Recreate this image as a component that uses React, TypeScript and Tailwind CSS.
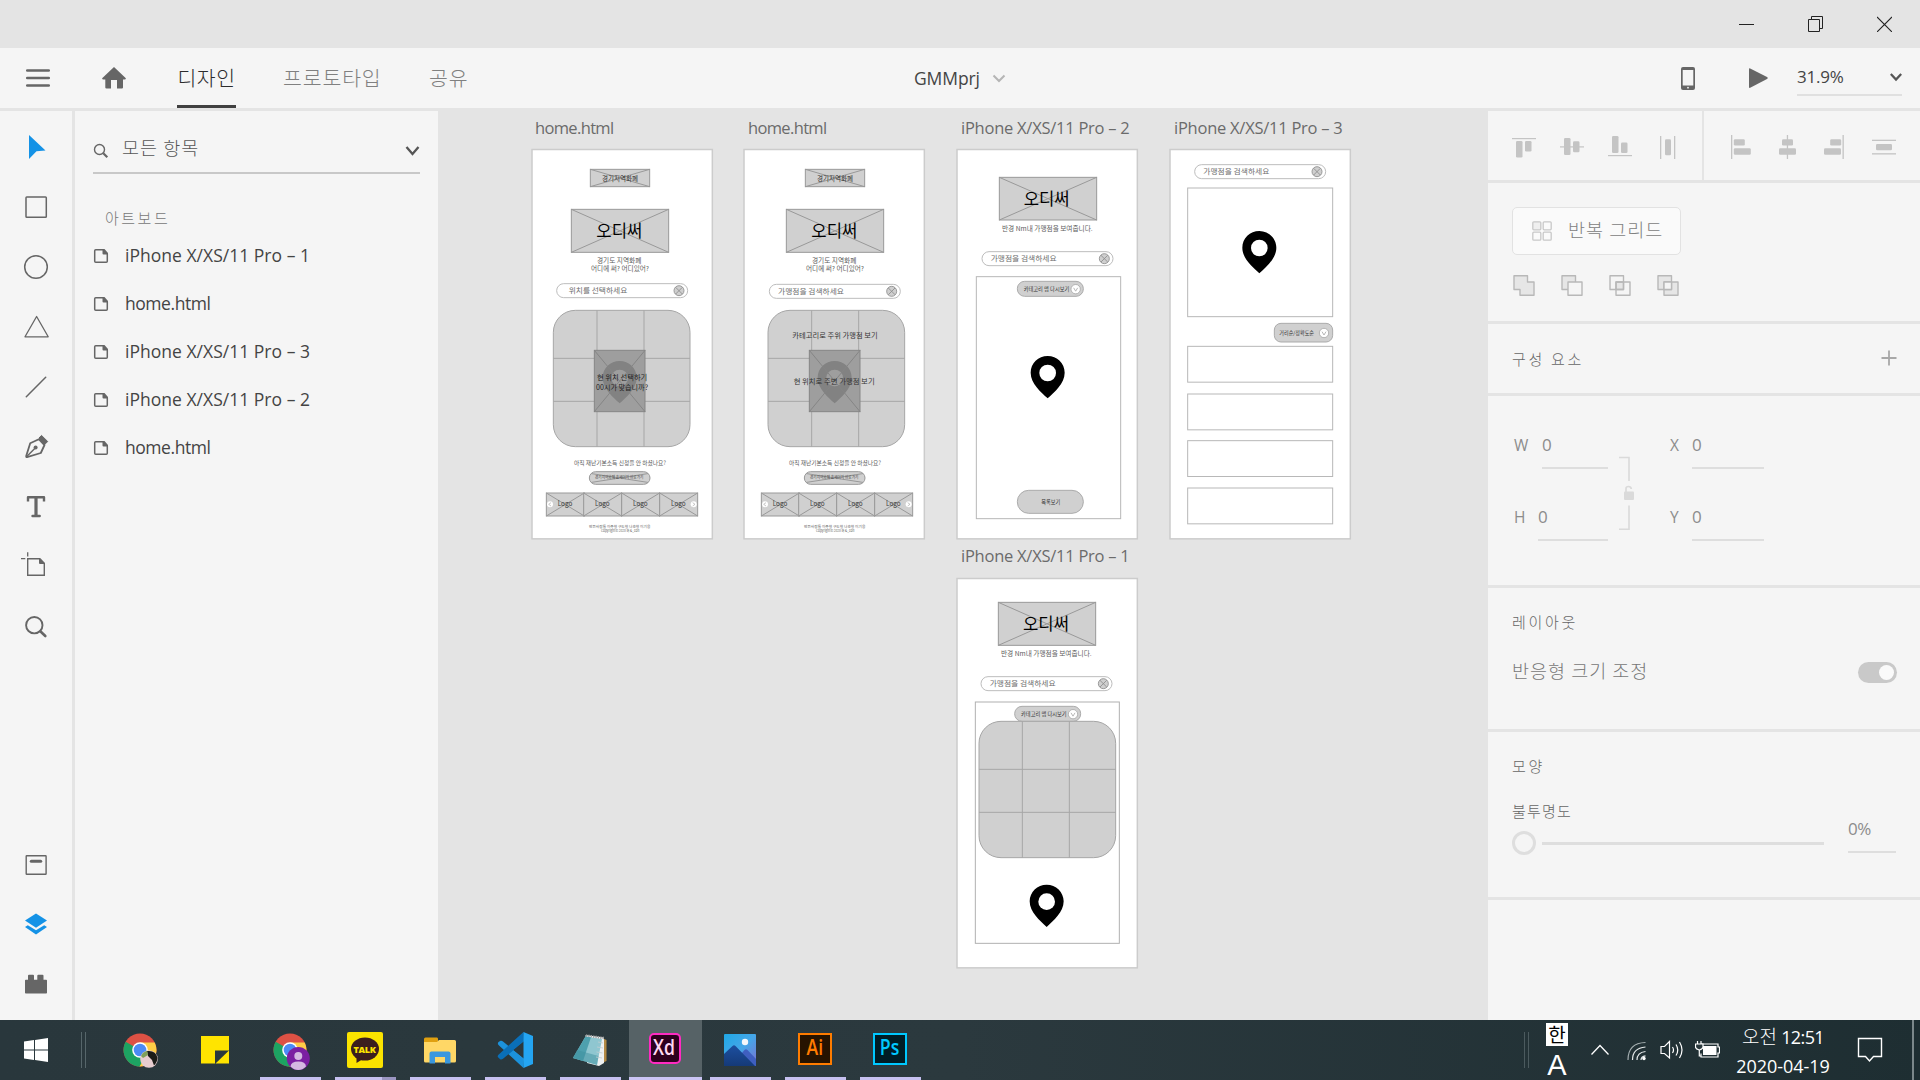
import React from "react";

const UI = "font-['Open_Sans','Noto_Sans_CJK_KR',sans-serif]";
const KR = "font-['Noto_Sans_CJK_KR','Open_Sans',sans-serif]";

/* ---------- wireframe primitives (drawn at three units per pixel) ---------- */

type TProps = {
  x: number;
  y: number;
  w: number;
  size: number;
  fill?: string;
  weight?: number;
  children: string;
};
function Label({ x, y, w, size, fill = "#5c5c5c", weight = 400, children }: TProps) {
  return (
    <text
      x={x}
      y={y}
      textLength={w}
      lengthAdjust="spacingAndGlyphs"
      fontSize={size}
      fontWeight={weight}
      fill={fill}
      className={KR}
    >
      {children}
    </text>
  );
}

function CrossBox({ x, y, w, h, r = 0, fill = "#d0d0d0", stroke = "#999" }: { x: number; y: number; w: number; h: number; r?: number; fill?: string; stroke?: string }) {
  const i = r * 0.3;
  return (
    <g stroke={stroke} strokeWidth={3}>
      <rect x={x} y={y} width={w} height={h} rx={r} fill={fill} />
      <path fill="none" d={`M${x + i} ${y + i}L${x + w - i} ${y + h - i}M${x + w - i} ${y + i}L${x + i} ${y + h - i}`} />
    </g>
  );
}

function Pin({ x, y, fill = "#000", hole = "#fff" }: { x: number; y: number; fill?: string; hole?: string }) {
  return (
    <g transform={`translate(${x} ${y + 1})`}>
      <path fill={fill} d="M0-51C28-51 51-29 51-1C51 32 20 57 0 76C-20 57-51 32-51-1C-51-29-28-51 0-51Z" />
      <circle r={25} fill={hole} />
    </g>
  );
}

function SearchPill({ x, y, text, tx, tw }: { x: number; y: number; text: string; tx: number; tw: number }) {
  return (
    <g>
      <rect x={x} y={y} width={393} height={42} rx={21} fill="#fff" stroke="#bdbdbd" strokeWidth={3} />
      <Label x={tx} y={y + 28} w={tw} size={22} fill="#6e6e6e">{text}</Label>
      <g transform={`translate(${x + 367} ${y + 21})`} stroke="#8c8c8c" strokeWidth={2.5}>
        <circle r={15} fill="#cfcfcf" />
        <path d="M-10-10L10 10M10-10L-10 10" />
      </g>
    </g>
  );
}

function RoundGrid({ x, y, vx, hy }: { x: number; y: number; vx: number[]; hy: number[] }) {
  return (
    <g stroke="#a6a6a6" strokeWidth={3}>
      <rect x={x} y={y} width={410} height={409} rx={66} fill="#d0d0d0" />
      {vx.map((v) => <path key={v} d={`M${v} ${y}V${y + 409}`} />)}
      {hy.map((v) => <path key={v} d={`M${x} ${v}H${x + 410}`} />)}
    </g>
  );
}

function DropPill({ x, y, w, h, r, text, tx, tw }: { x: number; y: number; w: number; h: number; r: number; text: string; tx: number; tw: number }) {
  return (
    <g>
      <rect x={x} y={y} width={w} height={h} rx={r} fill="#d0d0d0" stroke="#ababab" strokeWidth={3} />
      <Label x={tx} y={y + h / 2 + 6} w={tw} size={16.5} fill="#333">{text}</Label>
      <g transform={`translate(${x + w - (w > 190 ? 23 : 26)} ${y + h / 2 + 1})`}>
        <circle r={14} fill="#fff" stroke="#999" strokeWidth={2} />
        <path d="M-6-4L0 6L6-4" fill="none" stroke="#aaa" strokeWidth={2.5} />
      </g>
    </g>
  );
}

function Board({ left, top, ox, oy, children }: { left: string; top: string; ox: number; oy: number; children: React.ReactNode }) {
  return (
    <svg className={`absolute ${left} ${top} h-[392px] w-[183px]`} viewBox={`${ox} ${oy} 549 1176`}>
      <rect x={ox + 3} y={oy + 4.5} width={541} height={1168} fill="#fff" stroke="#cccccc" strokeWidth={4.5} />
      {children}
    </svg>
  );
}

function HomeFooter() {
  return (
    <g>
      <Label x={162} y={1095} w={276} size={17.5}>아직 재난기본소득 신청을 안 하셨나요?</Label>
      <CrossBox x={208} y={1115} w={182} h={38} r={19} />
      <Label x={225} y={1138} w={145} size={12} fill="#444">경기지역화폐 홈페이지 바로가기</Label>
      {[79, 191, 305, 419].map((x) => (
        <g key={x}>
          <CrossBox x={x} y={1179} w={114} h={69} />
          <Label x={x + 34} y={1218} w={44} size={21} fill="#3c3c3c">Logo</Label>
        </g>
      ))}
      {[90, 521].map((x, i) => (
        <g key={x} transform={`translate(${x} 1213) scale(${i ? -1 : 1} 1)`}>
          <circle r={9} fill="#fff" />
          <path d="M3-5L-4 0L3 5" fill="none" stroke="#aaa" strokeWidth={2} />
        </g>
      ))}
      <Label x={207} y={1284} w={184} size={11.5}>만든사람들 이주형 구도형 나호형 이기웅</Label>
      <Label x={243} y={1297} w={115} size={11.5}>Copyright© 2020 화 &_con</Label>
    </g>
  );
}

function HomeTop() {
  return (
    <g>
      <CrossBox x={211} y={208} w={178} h={52} />
      <Label x={246} y={243} w={108} size={20} fill="#333">경기지역화폐</Label>
      <CrossBox x={154} y={328} w={292} h={129} />
      <Label x={229} y={412} w={138} size={51} fill="#000">오디써</Label>
      <Label x={231} y={488} w={133} size={19}>경기도 지역화폐</Label>
      <Label x={213} y={512} w={174} size={19}>어디에 써? 어디있어?</Label>
    </g>
  );
}

function MapTile() {
  return (
    <g>
      <rect x={223} y={751} width={152} height={184} fill="#9e9e9e" stroke="#858585" strokeWidth={3} />
      <Pin x={299} y={833} fill="#828282" hole="#9e9e9e" />
      <path d="M223 751L375 935M375 751L223 935" stroke="#858585" strokeWidth={3} />
    </g>
  );
}

function Canvas() {
  const title = `absolute whitespace-nowrap text-[16.5px] leading-[22px] text-[#6b6b6b] ${UI}`;
  const long = "tracking-[-0.25px]";
  return (
    <main className="relative flex-1 overflow-hidden bg-[#e4e4e4]">
      <span className={`${title} left-[97px] top-[6px] tracking-[-0.65px]`}>home.html</span>
      <span className={`${title} left-[310px] top-[6px] tracking-[-0.65px]`}>home.html</span>
      <span className={`${title} ${long} left-[523px] top-[6px]`}>iPhone X/XS/11 Pro – 2</span>
      <span className={`${title} ${long} left-[736px] top-[6px]`}>iPhone X/XS/11 Pro – 3</span>
      <span className={`${title} ${long} left-[523px] top-[434px]`}>iPhone X/XS/11 Pro – 1</span>

      <Board left="left-[93px]" top="top-[37px]" ox={33} oy={144}>
        <HomeTop />
        <SearchPill x={110} y={551} text="위치를 선택하세요" tx={146} tw={176} />
        <RoundGrid x={100} y={631} vx={[231, 372]} hy={[775, 904]} />
        <MapTile />
        <Label x={231} y={840} w={151} size={22} fill="#222">현 위치 선택하기</Label>
        <Label x={228} y={869} w={156} size={22} fill="#222">00시가 맞습니까?</Label>
        <HomeFooter />
      </Board>

      <Board left="left-[305px]" top="top-[37px]" ox={24} oy={144}>
        <HomeTop />
        <SearchPill x={103} y={553} text="가맹점을 검색하세요" tx={129} tw={198} />
        <RoundGrid x={99} y={631} vx={[230, 371]} hy={[775, 904]} />
        <MapTile />
        <Label x={172} y={713} w={256} size={22} fill="#333">카테고리로 주위 가맹점 보기</Label>
        <Label x={176} y={851} w={243} size={22} fill="#333">현 위치로 주변 가맹점 보기</Label>
        <HomeFooter />
      </Board>

      <Board left="left-[518px]" top="top-[37px]" ox={33} oy={144}>
        <CrossBox x={163} y={232} w={292} h={128} />
        <Label x={236} y={316} w={138} size={51} fill="#000">오디써</Label>
        <Label x={171} y={392} w={272} size={19}>반경 Nm내 가맹점을 보여줍니다.</Label>
        <SearchPill x={111} y={455} text="가맹점을 검색하세요" tx={137} tw={198} />
        <rect x={94} y={530} width={433} height={726} fill="#fff" stroke="#b8b8b8" strokeWidth={3} />
        <DropPill x={217} y={544} w={198} h={45} r={22} text="카테고리 맵 다시보기" tx={236} tw={137} />
        <Pin x={308} y={818} />
        <rect x={217} y={1171} width={198} height={69} rx={34} fill="#d0d0d0" stroke="#ababab" strokeWidth={3} />
        <Label x={289} y={1212} w={57} size={16.5} fill="#333">목록보기</Label>
      </Board>

      <Board left="left-[731px]" top="top-[37px]" ox={672} oy={144}>
        <SearchPill x={749} y={194} text="가맹점을 검색하세요" tx={775} tw={198} />
        <rect x={728} y={264} width={435} height={386} fill="#fff" stroke="#b8b8b8" strokeWidth={3} />
        <Pin x={943} y={443} />
        <DropPill x={988} y={670} w={175} h={56} r={20} text="거리순/정확도순" tx={1003} tw={104} />
        {[739, 882, 1022, 1164].map((y) => (
          <rect key={y} x={728} y={y} width={435} height={107.5} fill="#fff" stroke="#b8b8b8" strokeWidth={3} />
        ))}
      </Board>

      <Board left="left-[518px]" top="top-[466px]" ox={33} oy={111}>
        <CrossBox x={160} y={187} w={292} h={129} />
        <Label x={234} y={271} w={138} size={51} fill="#000">오디써</Label>
        <Label x={168} y={347} w={272} size={19}>반경 Nm내 가맹점을 보여줍니다.</Label>
        <SearchPill x={108} y={410} text="가맹점을 검색하세요" tx={134} tw={198} />
        <rect x={91} y={486} width={432} height={724} fill="#fff" stroke="#b0b0b0" strokeWidth={3} />
        <DropPill x={209} y={499} w={198} h={45} r={22} text="카테고리 맵 다시보기" tx={228} tw={137} />
        <RoundGrid x={102} y={544} vx={[232, 373]} hy={[688, 817]} />
        <Pin x={305} y={1084} />
      </Board>
    </main>
  );
}

/* ---------- window chrome ---------- */

function TitleBar() {
  return (
    <header className="flex h-12 shrink-0 items-center justify-end gap-[54px] bg-[#e4e4e4] pr-[28px]">
      <svg className="h-4 w-[15px]" viewBox="0 0 15 16"><path d="M0 8.5H15" stroke="#222" /></svg>
      <svg className="h-4 w-[15px]" viewBox="0 0 15 16" fill="none" stroke="#222"><path d="M.5 3.500H11.500V15.500H.5ZM3.500 3.500V.500H14.500V12.500H11.500" /></svg>
      <svg className="h-4 w-[15px]" viewBox="0 0 15 16" stroke="#222" strokeWidth="1.1"><path d="M0 1L15 16M15 1L0 16" /></svg>
    </header>
  );
}

function AppBar() {
  return (
    <nav className="flex h-[63px] shrink-0 border-b-[3px] border-[#e4e4e4] bg-[#f5f5f5] text-[#444]">
      <svg className="ml-[25px] mt-[18px] h-6 w-[26px]" viewBox="0 0 26 24" stroke="#666" strokeWidth="2.7" strokeLinecap="round"><path d="M2.300 4.500H23.700M2.300 12H23.700M2.300 19.500H23.700" /></svg>
      <svg className="ml-[51px] mt-[18px] h-6 w-6" viewBox="0 0 24 24" fill="#666"><path d="M12 1L23.600 12Q24.500 13.500 22.500 13.500H21V21.500Q21 22.500 20 22.500H15V14H9V22.500H4.500Q3.300 22.500 3.300 21.500V13.500H1.500Q-.5 13.500.4 12Z" /></svg>
      <div className={`flex text-[20.5px] font-light leading-[58px] ${KR}`}>
        <span className="ml-[51px] w-[59px] border-b-[3px] border-[#404040] text-center tracking-[0.4px] text-[#2c2c2c]">디자인</span>
        <span className="ml-[47px] w-[100px] tracking-[0.85px] text-[#808080]">프로토타입</span>
        <span className="ml-[46px] w-[42px] tracking-[0.9px] text-[#808080]">공유</span>
      </div>
      <div className={`ml-[443px] flex w-[92px] items-center justify-between text-[17.5px] ${UI}`}>
        <span className="tracking-[-0.1px]">GMMprj</span>
        <svg className="h-3 w-[14px]" viewBox="0 0 14 12" fill="none" stroke="#b5b5b5" strokeWidth="2"><path d="M1.500 3.500L7 9L12.500 3.500" /></svg>
      </div>
      <svg className="ml-auto mt-[19px] h-6 w-[14px]" viewBox="0 0 14 24"><rect width="14" height="23" rx="2" fill="#666" /><rect x="1.700" y="3" width="10.600" height="15.500" fill="#f5f5f5" /><circle cx="7" cy="20.700" r=".9" fill="#f5f5f5" /></svg>
      <svg className="ml-[54px] mt-[20px] h-[21px] w-[19px]" viewBox="0 0 19 21"><path d="M0 1.200Q0 0 1.200.5L18 9Q19.500 10 18 11L1.200 19.800Q0 20.300 0 19Z" fill="#666" /></svg>
      <div className="ml-[29px] mr-[18px] mt-[14px] flex h-[34px] w-[105px] items-center justify-between border-b-2 border-[#e0e0e0] pb-[2px]">
        <span className={`text-[17px] tracking-[-0.2px] ${UI}`}>31.9%</span>
        <svg className="h-3 w-3" viewBox="0 0 12 12" fill="none" stroke="#555" strokeWidth="2.300"><path d="M.8 3L6 8.500L11.200 3" /></svg>
      </div>
    </nav>
  );
}

function ToolCell({ children }: { children: React.ReactNode }) {
  return (
    <div className="flex h-[60px] items-center justify-center">
      <svg className="h-9 w-9" viewBox="0 0 36 36" fill="none" stroke="#666" strokeWidth="1.500">{children}</svg>
    </div>
  );
}

function ToolRail() {
  return (
    <aside className="flex w-[75px] shrink-0 flex-col border-r-[3px] border-[#e4e4e4] bg-[#f5f5f5] py-[6px]">
      <ToolCell><path d="M11 6L27.500 21.500L18.500 22.300L11 30Z" fill="#1492e6" stroke="none" /></ToolCell>
      <ToolCell><rect x="8" y="8" width="20.300" height="20.300" rx=".8" /></ToolCell>
      <ToolCell><circle cx="18" cy="18" r="11.300" /></ToolCell>
      <ToolCell><path d="M18.600 7.500L30.200 27.800H7Z" strokeLinejoin="round" strokeWidth="1.300" /></ToolCell>
      <ToolCell><path d="M8.300 27.700L27.700 8.300" strokeLinecap="round" /></ToolCell>
      <ToolCell>
        <path d="M9 28.200Q8 28.200 8.200 27L12.200 14.200L20.800 10.200L26.500 16L22.800 24Z" strokeWidth="1.800" strokeLinejoin="round" />
        <path d="M8.500 27.700L17 19.300" />
        <circle cx="17.600" cy="18.500" r="2" fill="#666" stroke="none" />
        <path d="M21 9L23.500 6.400L29.700 12.500L27.100 15.100Z" fill="#666" strokeLinejoin="round" strokeWidth="1" />
      </ToolCell>
      <ToolCell>
        <path d="M10 12.500V8.200H26V12.500" strokeWidth="2.400" strokeLinejoin="round" />
        <path d="M18 8V27" strokeWidth="3.200" /><path d="M14.500 27H21.700" strokeWidth="2.400" strokeLinecap="round" />
      </ToolCell>
      <ToolCell>
        <path d="M22 9.700H9.700V26.200H26.300V14" strokeWidth="1.400" /><path d="M21 9H22.200L27 14V15H22Q21 15 21 14Z" fill="#666" stroke="none" />
        <path d="M3 9.700H7.300M9.700 3.200V7.500" strokeWidth="1.300" />
      </ToolCell>
      <ToolCell><circle cx="16.300" cy="16.200" r="8.200" strokeWidth="1.900" /><path d="M22.300 22.300L27.300 27" strokeWidth="2.600" strokeLinecap="round" /></ToolCell>
      <div className="mt-auto">
        <ToolCell><rect x="8.200" y="9.800" width="19.900" height="18.400" rx=".5" strokeWidth="1.400" /><path d="M13.300 15.300H22.700" strokeWidth="3" strokeLinecap="round" /></ToolCell>
        <ToolCell><g fill="#1492e6" stroke="none"><path d="M18 7.500L29 14.500L18 21.700L7 14.500Z" /><path d="M7 21L9.800 19.300L18 24.300L26.200 19.300L29 21L18 28.400Z" /></g></ToolCell>
        <ToolCell><path d="M7.800 13.800H10V9.800Q10 8.800 11 8.800H15Q16 8.800 16 9.800V13.800H19.300V9.800Q19.300 8.800 20.300 8.800H24.500Q25.500 8.800 25.500 9.800V13.800H28.200Q29 13.800 29 14.600V26.700Q29 27.500 28.200 27.500H7.800Q7 27.500 7 26.700V14.600Q7 13.800 7.800 13.800Z" fill="#666" stroke="none" /></ToolCell>
      </div>
    </aside>
  );
}

function LayersPanel() {
  const names = ["iPhone X/XS/11 Pro – 1", "home.html", "iPhone X/XS/11 Pro – 3", "iPhone X/XS/11 Pro – 2", "home.html"];
  return (
    <section className="w-[363px] shrink-0 bg-[#f5f5f5] pl-[18px]">
      <div className="mt-[14px] flex h-[49px] w-[327px] items-center border-b-2 border-[#c8c8c8]">
        <svg className="mt-[4px] h-4 w-4" viewBox="0 0 16 16" fill="none" stroke="#666" strokeWidth="1.400"><circle cx="6.500" cy="6.500" r="5" /><path d="M10.300 10.300L14.300 14.300" strokeWidth="2.200" /></svg>
        <span className={`ml-[13px] pb-[2px] text-[18.500px] font-light tracking-[1px] text-[#555] ${KR}`}>모든 항목</span>
        <svg className="ml-auto mt-[5px] h-3 w-[15px]" viewBox="0 0 15 12" fill="none" stroke="#555" strokeWidth="2.300"><path d="M1.500 2L7.500 9L13.500 2" /></svg>
      </div>
      <h2 className={`mt-[33px] pl-[12px] text-[15px] font-light leading-[22px] tracking-[2.500px] text-[#777] ${KR}`}>아트보드</h2>
      <ul className="mt-[3px]">
        {names.map((n, i) => (
          <li key={i} className={`flex h-12 items-center text-[17.500px] text-[#444] ${UI}`}>
            <svg className="h-4 w-[16px]" viewBox="0 0 16 16"><path d="M11 1.800H2.700Q1.700 1.800 1.700 2.800V13.200Q1.700 14.200 2.700 14.200H13.300Q14.300 14.200 14.300 13.200V6" fill="none" stroke="#666" strokeWidth="1.500" /><path d="M9.500 1.100H11.500L15 5V6.500H10.500Q9.500 6.500 9.500 5.500Z" fill="#666" /></svg>
            <span className={`ml-4 pb-[1px] ${n.length > 10 ? "tracking-[0.02px]" : "tracking-[-0.45px]"}`}>{n}</span>
          </li>
        ))}
      </ul>
    </section>
  );
}

/* ---------- property inspector ---------- */

function AlignIcon({ children }: { children: React.ReactNode }) {
  return <svg className="h-6 w-6" viewBox="0 0 24 24" fill="#c4c4c4">{children}</svg>;
}

function BoolIcon({ kind }: { kind: number }) {
  const S = { stroke: "#b8b8b8", strokeWidth: 1.4, strokeLinejoin: "round" as const };
  return (
    <svg className="h-6 w-6" viewBox="0 0 24 24" fill="none" {...S}>
      {kind === 0 && <path d="M2 1.700H15.500V8H22V21.300H8V15.500H2Z" fill="#e6e6e6" />}
      {kind === 1 && <><path d="M2 1.700H15.500V15.500H2Z" fill="#e6e6e6" /><path d="M8 8H22V21.300H8Z" fill="#f5f5f5" /></>}
      {kind === 2 && <><path d="M8 8H15.500V15.500H8Z" fill="#e6e6e6" /><path d="M2 1.700H15.500V15.500H2ZM8 8H22V21.300H8Z" /></>}
      {kind === 3 && <><path d="M2 1.700H15.500V15.500H2ZM8 8H22V21.300H8Z" fill="#e6e6e6" fillRule="evenodd" /><path d="M8 8H15.500V15.500H8Z" fill="#f5f5f5" /></>}
    </svg>
  );
}

function Field({ name, nameW, lineW, value = "0" }: { name: string; nameW: string; lineW: string; value?: string }) {
  return (
    <div className={`flex h-[38px] text-[17px] leading-[28px] text-[#8c8c8c] ${UI}`}>
      <span className={`${nameW} text-[15.500px] leading-[28px]`}>{name}</span>
      <span className={`${lineW} border-b-2 border-[#dedede]`}>{value}</span>
    </div>
  );
}

function Inspector() {
  const head = `text-[15px] font-light leading-[22px] tracking-[2.700px] text-[#666] ${KR}`;
  const rule = "border-b-[3px] border-[#e4e4e4]";
  return (
    <aside className="flex w-[432px] shrink-0 flex-col bg-[#f5f5f5]">
      <div className={`flex h-[72px] shrink-0 ${rule}`}>
        <div className="flex w-[216px] items-center gap-6 border-r-2 border-[#e4e4e4] pl-6 pt-[4px]">
          <AlignIcon><rect y="2" width="24" height="1.200" /><rect x="4" y="5" width="6.500" height="16.500" rx="1.300" /><rect x="13" y="5" width="6.500" height="10.500" rx="1.300" /></AlignIcon>
          <AlignIcon><rect y="10.300" width="24" height="1.200" /><rect x="4" y="2" width="6.500" height="17" rx="1.300" /><rect x="13" y="5.200" width="6.500" height="11" rx="1.300" /></AlignIcon>
          <AlignIcon><rect y="19" width="24" height="1.200" /><rect x="4" y="0" width="6.500" height="17" rx="1.300" /><rect x="13" y="6.500" width="6.500" height="10.500" rx="1.300" /></AlignIcon>
          <AlignIcon><rect x="4" width="1.300" height="23" /><rect x="18" width="1.300" height="23" /><rect x="9" y="3.200" width="6" height="16" rx="1.300" /></AlignIcon>
        </div>
        <div className="flex flex-1 items-center gap-6 pl-6 pt-[3px]">
          <AlignIcon><rect x="3" width="1.300" height="24" /><rect x="5.800" y="4.200" width="11" height="6.300" rx="1.300" /><rect x="5.800" y="13.300" width="17" height="6.500" rx="1.300" /></AlignIcon>
          <AlignIcon><rect x="10.800" width="1.300" height="24" /><rect x="6" y="4.200" width="11" height="6.300" rx="1.300" /><rect x="3" y="13.300" width="17" height="6.500" rx="1.300" /></AlignIcon>
          <AlignIcon><rect x="18.500" width="1.300" height="24" /><rect x="6.200" y="4.200" width="11" height="6.300" rx="1.300" /><rect x="0" y="13.300" width="17" height="6.500" rx="1.300" /></AlignIcon>
          <AlignIcon><rect y="4.700" width="24" height="1.300" /><rect y="18.200" width="24" height="1.300" /><rect x="4" y="9" width="16" height="6.200" rx="1.300" /></AlignIcon>
        </div>
      </div>

      <div className={`h-[141px] shrink-0 pl-6 pt-6 ${rule}`}>
        <button className="flex h-12 w-[169px] items-center rounded-[5px] border-[1.500px] border-[#e2e2e2] bg-[#fafafa] pl-[19px]">
          <svg className="h-5 w-5" viewBox="0 0 20 20" fill="none" stroke="#c8c8c8" strokeWidth="1.300"><rect x=".8" y=".8" width="8" height="8" rx="1" fill="#efefef" /><rect x="11.200" y=".8" width="8" height="8" rx="1" /><rect x=".8" y="11.200" width="8" height="8" rx="1" /><rect x="11.200" y="11.200" width="8" height="8" rx="1" /></svg>
          <span className={`ml-4 whitespace-nowrap pb-[3px] text-[18.500px] font-light tracking-[1px] text-[#808080] ${KR}`}>반복 그리드</span>
        </button>
        <div className="mt-[19px] flex gap-6">
          {[0, 1, 2, 3].map((k) => <BoolIcon key={k} kind={k} />)}
        </div>
      </div>

      <div className={`flex h-[72px] shrink-0 items-center justify-between pl-6 pr-[23px] ${rule}`}>
        <h3 className={head}>구성 요소</h3>
        <svg className="mb-[2px] h-4 w-4" viewBox="0 0 16 16" stroke="#a8a8a8" strokeWidth="1.800"><path d="M.5 8H15.500M8 .5V15.500" /></svg>
      </div>

      <div className={`flex h-[192px] shrink-0 pl-[26px] pt-[35px] ${rule}`}>
        <div className="flex w-[94px] flex-col gap-[34px]">
          <Field name="W" nameW="w-[28px]" lineW="w-[66px]" />
          <Field name="H" nameW="w-[24px]" lineW="w-[70px]" />
        </div>
        <svg className="ml-[10px] mt-[24px] h-[80px] w-[18px]" viewBox="0 0 18 80" fill="none" stroke="#dadada" strokeWidth="1.600">
          <path d="M1 2.500H11V26M11 50.500V74.300H1" />
          <rect x="6" y="36.500" width="10" height="8.500" rx="1" fill="#dadada" stroke="none" />
          <path d="M8 37V33.500Q8 31.500 10.500 31.500Q13 31.500 13.300 34" strokeWidth="1.700" />
        </svg>
        <div className="ml-[34px] flex flex-col gap-[34px]">
          <Field name="X" nameW="w-[22px]" lineW="w-[72px]" />
          <Field name="Y" nameW="w-[22px]" lineW="w-[72px]" />
        </div>
      </div>

      <div className={`h-[144px] shrink-0 pl-6 pt-[23px] ${rule}`}>
        <h3 className={head}>레이아웃</h3>
        <div className="mt-[26px] flex h-[26px] items-center justify-between pr-[23px]">
          <span className={`pb-[3px] text-[18.500px] font-light tracking-[1px] text-[#777] ${KR}`}>반응형 크기 조정</span>
          <span className="flex h-[21px] w-[39px] items-center justify-end rounded-full bg-[#c9c9c9] pr-[3px]"><i className="size-[15px] rounded-full bg-[#fafafa]" /></span>
        </div>
      </div>

      <div className={`flex h-[168px] shrink-0 pl-6 ${rule}`}>
        <div className="w-[312px] pt-[23px]">
          <h3 className={head}>모양</h3>
          <p className={`mt-[23px] text-[15px] font-light leading-[22px] tracking-[1.200px] text-[#666] ${KR}`}>불투명도</p>
          <div className="mt-[9px] flex items-center gap-[6px]">
            <span className="size-6 rounded-full border-[3px] border-[#dedede]" />
            <span className="h-[3px] flex-1 bg-[#dedede]" />
          </div>
        </div>
        <span className={`ml-6 mt-[83px] h-[38px] w-12 border-b-2 border-[#dedede] text-[17px] leading-[27px] tracking-[-0.400px] text-[#8c8c8c] ${UI}`}>0%</span>
      </div>
    </aside>
  );
}

/* ---------- taskbar ---------- */

function Slot({ state = "open", children }: { state?: "idle" | "open" | "active" | "stacked"; children: React.ReactNode }) {
  return (
    <div className={`relative flex h-[60px] shrink-0 items-center justify-center pr-[2px] ${state === "active" ? "mx-[1px] w-[73px] bg-[#566266]" : "w-[75px]"}`}>
      {children}
      {state === "active" && <i className="absolute inset-x-0 bottom-0 h-[3px] bg-[#cbc5f5]" />}
      {state === "open" && <i className="absolute inset-x-[7px] bottom-0 h-[3px] bg-[#c6c0f0]" />}
      {state === "stacked" && <i className="absolute inset-x-[7px] bottom-0 h-[3px] border-r-[14px] border-[#9b96c2] bg-[#c6c0f0]" />}
    </div>
  );
}

function ChromeIcon({ profile }: { profile: "photo" | "user" }) {
  return (
    <svg className="h-10 w-10" viewBox="0 0 40 40">
      <circle cx="20" cy="20" r="16.500" fill="#dd5144" />
      <path d="M20 20L5.700 11.800A16.500 16.500 0 0 0 20 36.500L27.500 24Z" fill="#1da362" />
      <path d="M20 12.500H34.700A16.500 16.500 0 0 1 19.500 36.500L27 23.500Z" fill="#ffcd46" />
      <circle cx="20" cy="20" r="7.800" fill="#fff" /><circle cx="20" cy="20" r="6.300" fill="#4c8bf5" />
      {profile === "user" ? (
        <g><circle cx="28.300" cy="28.500" r="11.500" fill="#7b1fa2" /><circle cx="28.300" cy="26" r="4" fill="#d5b8e2" /><path d="M20.500 36.500Q21 31.500 28.300 31.500Q35.600 31.500 36 36.500Q32.500 40 28.300 40Q24 40 20.500 36.500Z" fill="#d5b8e2" /></g>
      ) : (
        <g><circle cx="29" cy="29" r="8.800" fill="#e8cdd0" /><path d="M27 21Q36 20 37.500 28Q37 33 34 35.500L32 30L28 26Z" fill="#1c1c18" /><path d="M21 26Q23 22 27 20.500L28 25L23 28Z" fill="#7fa05a" /></g>
      )}
    </svg>
  );
}

function AdobeTile({ text, cls }: { text: string; cls: string }) {
  return <div className={`flex items-center justify-center font-['Open_Sans',sans-serif] text-[21px] font-semibold leading-none ${cls}`}><span className="scale-x-[0.840] pb-[2px]">{text}</span></div>;
}

function Taskbar() {
  return (
    <footer className="flex h-[60px] shrink-0 bg-linear-to-r from-[#29373c] via-[#2b393e] to-[#1e2e32] text-white">
      <svg className="ml-6 mt-[18px] h-6 w-6" viewBox="0 0 24 24" fill="#fff"><path d="M0 3.500L10 2.100V11.500H0ZM11 1.900L24 0V11.500H11ZM0 12.500H10V21.900L0 20.500ZM11 12.500H24V24L11 22.100Z" /></svg>
      <div className="ml-[33px] mr-[17px] mt-3 h-9 w-[5px] border-x border-[#56666a]" />
      <Slot state="idle"><ChromeIcon profile="photo" /></Slot>
      <Slot state="idle"><svg className="h-7 w-7" viewBox="0 0 28 28"><path d="M0 0H28V14.500H14V27.500H0Z" fill="#ffe400" /><path d="M28 14.500V27.500H14.500Z" fill="#ffe400" /></svg></Slot>
      <Slot><ChromeIcon profile="user" /></Slot>
      <Slot state="stacked">
        <div className="relative flex size-9 items-center justify-center rounded-[2px] bg-[#fbe300]">
          <svg className="absolute size-9" viewBox="0 0 36 36"><ellipse cx="18" cy="17" rx="14" ry="11.500" fill="#3b1e1e" /><path d="M9.500 25L9.500 31L16 27Z" fill="#3b1e1e" /></svg>
          <span className="relative pb-[2px] font-['Open_Sans',sans-serif] text-[9px] font-extrabold leading-none tracking-[-0.3px] text-[#fbe300]">TALK</span>
        </div>
      </Slot>
      <Slot>
        <svg className="h-7 w-8" viewBox="0 0 32 28"><path d="M0 3Q0 1.500 1.500 1.500H13Q14 1.500 14 3V7H0Z" fill="#e0a010" /><path d="M0 6H13L15 4H30.500Q32 4 32 5.500V25Q32 26.500 30.500 26.500H1.500Q0 26.500 0 25Z" fill="#ffd766" /><path d="M5.500 27.500V17.500Q5.500 15.500 7.500 15.500H24.500Q26.500 15.500 26.500 17.500V27.500H21V21H11V27.500Z" fill="#3b97dd" /></svg>
      </Slot>
      <Slot>
        <svg className="size-9" viewBox="0 0 36 36"><path d="M26.500 36L2 13.500Q0 11.500 1.500 10L3.500 8.800Q4.800 8.400 6 9.500L27 26.500Z" fill="#1c92dc" /><path d="M26.500 0L1.200 23Q0 24.500 1.500 25.800L3.500 27.500Q4.800 27.800 6 26.800L27 9.500Z" fill="#0a6fb8" /><path d="M27 9.500V26.500L16.500 18Z" fill="#2b393e" /><path d="M26.500 0L36 4V32L26.500 36Z" fill="#24a5f2" /></svg>
      </Slot>
      <Slot>
        <svg className="h-8 w-9" viewBox="0 0 36 32"><path d="M30 4L34.500 6V27L30 29Z" fill="#b38a45" /><path d="M13.500 1L32 3.500L32 29L27 32L15 29Z" fill="#eef1f2" /><path d="M13.500 2.500L30 5L25 31L1 24Z" fill="#8fc6d0" /><path d="M13.500 2.500L19 3.300L11 27L1 24Z" fill="#4ea0ae" /><path d="M1 24L5 16L26.500 22L25 31Z" fill="#3d8f9e" opacity=".5" /><path d="M26 8L31 9M25 13L31 14M24.500 18L30.500 19M24 23L30 24" stroke="#c2cdd0" strokeWidth=".8" /><path d="M14 1.500L32 4" stroke="#9b9b9b" strokeWidth="2.500" strokeDasharray="1.200 1.200" /></svg>
      </Slot>
      <Slot state="active"><AdobeTile text="Xd" cls="mb-[3px] h-[31px] w-8 rounded-[5px] border-2 border-[#ff2bc2] bg-[#2e001e] text-[#ffd9f2]" /></Slot>
      <Slot>
        <svg className="size-8" viewBox="0 0 32 32"><defs><linearGradient id="sky" x1="0" y1="0" x2="1" y2="1"><stop offset="0" stopColor="#1fa8e6" /><stop offset=".5" stopColor="#45a6e8" /><stop offset="1" stopColor="#7d6fd0" /></linearGradient><linearGradient id="hill" x1="0" y1="0" x2="0" y2="1"><stop offset="0" stopColor="#1c4fa0" /><stop offset="1" stopColor="#153a78" /></linearGradient></defs><rect width="32" height="32" rx="1" fill="url(#sky)" /><path d="M17 20L20.500 16Q22 14.500 23.500 16L32 25V32H17Z" fill="#3f5fc0" /><path d="M0 20L8.500 12Q10 10.500 11.500 12L31 32H0Z" fill="url(#hill)" /><circle cx="21" cy="8" r="3.200" fill="#f5f7fa" /></svg>
      </Slot>
      <Slot><AdobeTile text="Ai" cls="mb-[3px] h-8 w-[34px] border-2 border-[#ff7c00] bg-[#261300] text-[#ff7c00]" /></Slot>
      <Slot><AdobeTile text="Ps" cls="mb-[3px] h-8 w-[34px] border-2 border-[#00c8ff] bg-[#001d26] text-[#00c8ff]" /></Slot>

      <div className="ml-auto mt-3 h-9 w-[5px] border-x border-[#4b5a5e]" />
      <div className="ml-[16px] flex w-6 flex-col items-center pt-[3px]">
        <span className={`flex h-[23px] w-[22px] items-center justify-center bg-white pb-[2px] text-[19px] leading-[21px] text-black ${KR}`}>한</span>
        <span className="mt-[5px] font-['Liberation_Sans',sans-serif] text-[29px] leading-7">A</span>
      </div>
      <svg className="ml-[21px] mt-6 h-3 w-5" viewBox="0 0 20 12" fill="none" stroke="#fff" strokeWidth="1.300"><path d="M1.500 10.500L10 1.500L18.500 10.500" /></svg>
      <svg className="ml-[17px] mt-[21px] h-5 w-[20px]" viewBox="0 0 20 20" fill="none" stroke="#e6eaeb" strokeWidth="1.200"><path d="M1 19Q1 2 18.500 1.500" stroke="#a5afb1" /><path d="M5.500 19Q5.500 7 18.500 6M10 19Q10 11.500 18.500 10.500M14 19Q14 15.500 18.500 14.800" /><circle cx="17" cy="17.500" r="1.700" fill="#fff" stroke="none" /></svg>
      <svg className="ml-[13px] mt-[20px] h-5 w-[24px]" viewBox="0 0 24 20" fill="none" stroke="#fff" strokeWidth="1.200"><path d="M1 6.500H4.500L9.500 1.500V18L4.500 13.500H1Z" /><path d="M12.500 7Q14.500 10 12.500 13M16 4.500Q19.500 10 16 15.500M19.500 2Q24.500 10 19.500 18" /></svg>
      <svg className="ml-[11px] mt-[20px] h-5 w-[25px]" viewBox="0 0 25 20"><path d="M6 4H23V7H24.500V13H23V17H6V13.500M6 4V7" fill="none" stroke="#fff" strokeWidth="1.200" /><rect x="8" y="6" width="13.500" height="9" fill="#fff" /><path d="M2.500 1V4M6 1V4" stroke="#fff" strokeWidth="1.200" /><path d="M.5 4H8V7Q8 9 4.300 10Q.5 9 .5 7Z" fill="#2a393d" stroke="#fff" strokeWidth="1.200" /><path d="M4.300 10V16H6" fill="none" stroke="#fff" strokeWidth="1.200" /></svg>
      <div className="ml-[13px] flex w-[100px] flex-col items-center pt-[2px] leading-[28.500px]">
        <span className={`whitespace-nowrap text-[19px] font-light ${KR}`}>오전 <span className="font-['Open_Sans',sans-serif] text-[18px] font-normal tracking-[-0.600px]">12:51</span></span>
        <span className="whitespace-nowrap font-['Open_Sans',sans-serif] text-[18px] tracking-[-0.050px]">2020-04-19</span>
      </div>
      <svg className="ml-[24px] mr-[29px] mt-[17px] h-[26px] w-[26px]" viewBox="0 0 26 26" fill="none" stroke="#fff" strokeWidth="1.400"><path d="M1.500 1.500H24.500V19.500H16.500L12.500 24L8.500 19.500H1.500Z" /></svg>
      <div className="mr-[6px] h-full w-[2px] bg-[#7b878a]" />
    </footer>
  );
}

export default function App() {
  return (
    <div className="flex h-[1080px] w-[1920px] flex-col overflow-hidden">
      <TitleBar />
      <AppBar />
      <div className="flex min-h-0 flex-1">
        <ToolRail />
        <LayersPanel />
        <Canvas />
        <Inspector />
      </div>
      <Taskbar />
    </div>
  );
}
